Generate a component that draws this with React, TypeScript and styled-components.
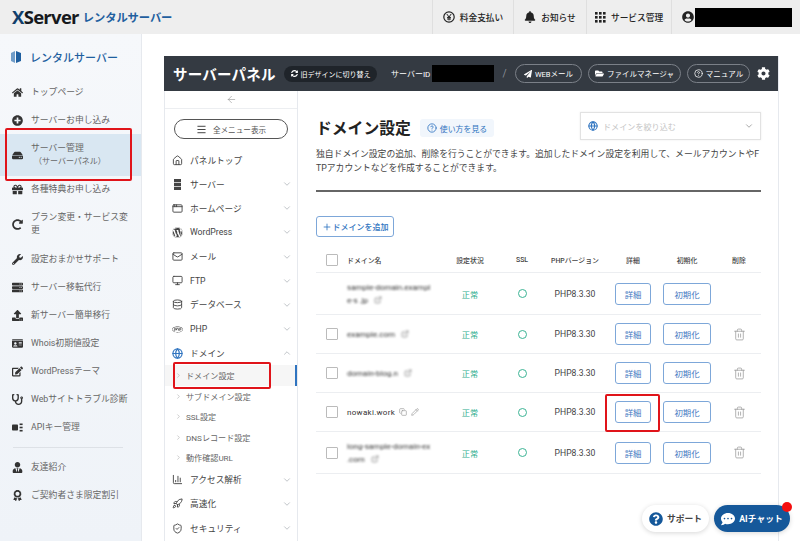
import styled, { createGlobalStyle } from 'styled-components';
import {
  FaAward, FaBell, FaCog, FaCommentDots, FaEdit, FaFolderOpen, FaGift, FaHdd, FaHome, FaIdCard,
  FaPaperPlane, FaPhp, FaPlusCircle, FaQuestionCircle, FaRedoAlt, FaServer, FaStethoscope, FaSyncAlt,
  FaUpload, FaUserCircle, FaUserTie, FaWordpress, FaWrench,
} from 'react-icons/fa';
import {
  AppWindow, ArrowLeft, ChartColumn, ChevronDown, ChevronRight, ChevronUp, CircleHelp, Copy, Database,
  ExternalLink, Globe, House, Mail, Menu, Monitor, Pencil, Plus, Rocket, ShieldCheck, Trash2,
} from 'lucide-react';

const GlobalStyle = createGlobalStyle`
  html, body { margin: 0; padding: 0; background: #fff; }
  body { font-family: Roboto, "Noto Sans CJK JP", "Noto Sans", sans-serif; color: #444; font-size: 10px; }
  * { box-sizing: border-box; }
`;

const Page = styled.div`
  position: relative;
  width: 800px;
  height: 541px;
  overflow: hidden;
  display: flex;
  flex-direction: column;
`;

// top bar
const TopBar = styled.header`
  height: 34px;
  flex: none;
  background: #eeeeee;
  display: flex;
  align-items: center;
  justify-content: space-between;
`;
const Logo = styled.div`
  display: flex;
  align-items: center;
  gap: 4px;
  padding-left: 12px;
`;
const LogoMark = styled.span`
  font: 700 18.5px/1 "Open Sans", "Liberation Sans", sans-serif;
  letter-spacing: -0.7px;
  color: #16191d;
  &::first-letter { color: #123f6b; }
`;
const LogoText = styled.span`
  font-size: 11.3px;
  font-weight: 700;
  color: #1f5f9f;
  letter-spacing: -0.1px;
`;
const TopNav = styled.nav`
  display: flex;
  height: 34px;
`;
const TopItem = styled.div<{ $w: number }>`
  width: ${(p) => p.$w}px;
  display: flex;
  align-items: center;
  justify-content: center;
  gap: 5px;
  border-left: 1px solid #dfdfdf;
  font-size: 8.7px;
  font-weight: 500;
  color: #222;
  white-space: nowrap;
  svg { flex: none; }
`;
const UserItem = styled(TopItem)`
  justify-content: flex-start;
  gap: 1px;
  padding-left: 10px;
`;
const Masked = styled.div<{ $w: number; $h: number }>`
  width: ${(p) => p.$w}px;
  height: ${(p) => p.$h}px;
  background: #000;
  flex: none;
`;

// body
const Body = styled.div`
  flex: 1;
  display: flex;
  min-height: 0;
`;
const Sidebar = styled.aside`
  width: 142px;
  flex: none;
  background: linear-gradient(180deg, #f6f8fb 0%, #eff3f8 100%);
  border-right: 1px solid #e6e9ee;
`;
const SideTitle = styled.div`
  height: 44px;
  display: flex;
  align-items: center;
  gap: 9px;
  padding: 2px 0 0 11px;
  font-size: 11px;
  font-weight: 500;
  color: #1f5f9f;
`;
const SideItem = styled.div<{ $h?: number; $active?: boolean }>`
  height: ${(p) => p.$h ?? 28}px;
  display: flex;
  align-items: center;
  gap: 8px;
  padding: 0 8px 0 12px;
  background: ${(p) => (p.$active ? '#d9e7f2' : 'transparent')};
  color: #666;
  font-size: 8.8px;
  line-height: 13px;
  word-break: break-all;
  svg { flex: none; color: #333; width: 11px; height: 11px; }
`;
const SideSub = styled.div`
  font-size: 8px;
  line-height: 14px;
  padding-left: 3px;
`;
const SideMain = styled.div`
  line-height: 14px;
`;
const SideRule = styled.hr`
  margin: 6px 18px 5px 13px;
  border: 0;
  border-top: 1px solid #dde1e6;
`;

const Main = styled.main`
  flex: 1;
  padding: 22px 21px 0 22px;
  min-width: 0;
`;
const Panel = styled.section`
  height: 100%;
  display: flex;
  flex-direction: column;
  border-right: 1px solid #e6e9ee;
`;
const PanelBar = styled.div`
  height: 35px;
  flex: none;
  background: #343a42;
  color: #fff;
  display: flex;
  align-items: center;
  padding-left: 9px;
`;
const PanelTitle = styled.div`
  font-size: 14.5px;
  font-weight: 700;
  letter-spacing: 0.2px;
  width: 111px;
  white-space: nowrap;
`;
const SwitchPill = styled.div`
  width: 93px;
  height: 16px;
  border-radius: 8px;
  background: #1f242a;
  display: flex;
  align-items: center;
  justify-content: center;
  gap: 3px;
  font-size: 7px;
  white-space: nowrap;
`;
const ServerId = styled.span`
  margin-left: 14px;
  width: 41px;
  font-size: 8px;
  white-space: nowrap;
`;
const Slash = styled.span`
  width: 21px;
  text-align: center;
  color: #8b9098;
  font-size: 10px;
`;
const BarPill = styled.div<{ $w: number }>`
  width: ${(p) => p.$w}px;
  height: 19px;
  margin-right: 6px;
  border: 1px solid #7b8088;
  border-radius: 10px;
  display: flex;
  align-items: center;
  justify-content: center;
  gap: 3px;
  font-size: 7.5px;
  white-space: nowrap;
`;
const GearWrap = styled.div`
  display: flex;
  margin-left: 1px;
`;

const PanelBody = styled.div`
  flex: 1;
  display: flex;
  min-height: 0;
`;
const Menu_ = styled.div`
  width: 134px;
  flex: none;
  border-left: 1px solid #e6e9ee;
  border-right: 1px solid #e6e9ee;
`;
const BackRow = styled.div`
  height: 18px;
  display: flex;
  align-items: center;
  justify-content: center;
  border-bottom: 1px solid #eceef1;
  color: #888;
`;
const AllMenuWrap = styled.div`
  height: 39px;
  padding: 10px 9px 0;
`;
const AllMenu = styled.div`
  height: 20px;
  border: 1px solid #555;
  border-radius: 10px;
  display: flex;
  align-items: center;
  justify-content: center;
  gap: 6px;
  font-size: 7.6px;
  color: #555;
  svg { color: #333; }
`;
const MenuRow = styled.div`
  height: 24.15px;
  display: flex;
  align-items: center;
  gap: 7px;
  padding: 0 5px 0 7px;
  font-size: 8.7px;
  color: #444;
  > svg:first-child { width: 11px; height: 11px; flex: none; color: #444; }
  > svg:last-child:not(:first-child) { margin-left: auto; color: #b5b9be; }
`;
const SubRow = styled.div<{ $active?: boolean }>`
  position: relative;
  height: 20.5px;
  display: flex;
  align-items: center;
  gap: 4px;
  padding-left: 10px;
  font-size: 8.1px;
  color: #666;
  background: ${(p) => (p.$active ? '#f6f6f6' : 'transparent')};
  svg { color: #aaa; flex: none; }
  ${(p) => (p.$active ? 'border-right: 2px solid #2f74c0;' : '')}
`;

// content
const Content = styled.div`
  flex: 1;
  min-width: 0;
  padding: 21px 17px 0 18px;
`;
const TitleRow = styled.div`
  display: flex;
  align-items: flex-start;
  height: 33px;
`;
const PageTitle = styled.h1`
  margin: 6px 0 0;
  font-size: 15.8px;
  line-height: 22px;
  font-weight: 700;
  color: #222;
  white-space: nowrap;
  width: 104px;
`;
const HelpLink = styled.div`
  margin-top: 7px;
  width: 74px;
  height: 18px;
  border-radius: 3px;
  background: #f1f6fc;
  color: #2f74c0;
  font-size: 7.9px;
  display: flex;
  align-items: center;
  justify-content: center;
  gap: 3px;
  white-space: nowrap;
`;
const FilterBox = styled.div`
  margin-left: auto;
  width: 181px;
  height: 28px;
  border: 1px solid #e2e2e2;
  display: flex;
  align-items: center;
  gap: 5px;
  padding: 0 6px 0 7px;
  color: #c4c4c4;
  font-size: 8.1px;
  white-space: nowrap;
  box-shadow: 0 0 2px rgba(0, 0, 0, 0.08);
  > svg:last-child { margin-left: auto; color: #999; }
`;
const Description = styled.p`
  margin: 0;
  font-size: 8.8px;
  line-height: 14px;
  color: #444;
  word-break: break-all;
  height: 45px;
  padding-top: 2px;
`;
const Rule = styled.hr`
  margin: 0;
  border: 0;
  border-top: 2px solid #666;
`;
const AddButton = styled.div`
  margin-top: 24px;
  width: 78px;
  height: 21px;
  border: 1px solid #7da7d9;
  border-radius: 3px;
  display: flex;
  align-items: center;
  justify-content: center;
  gap: 1px;
  font-size: 8px;
  font-weight: 500;
  color: #2f74c0;
  white-space: nowrap;
`;
const Table = styled.div`
  margin-top: 11px;
`;
const Row = styled.div<{ $h: number; $head?: boolean }>`
  display: grid;
  grid-template-columns: 31px 90px 66px 38px 68px 48px 60px 44px;
  height: ${(p) => p.$h}px;
  align-items: center;
  border-bottom: 1px solid #eceef1;
  justify-items: center;
  color: #444;
  font-size: ${(p) => (p.$head ? '6.9px' : '8.6px')};
  font-weight: ${(p) => (p.$head ? 500 : 400)};
`;
const Check = styled.span`
  width: 12px;
  height: 12px;
  border: 1px solid #bbb;
  border-radius: 1px;
  display: block;
`;
const NameHead = styled.span`
  justify-self: start;
`;
const NameCell = styled.div`
  justify-self: start;
  display: flex;
  align-items: center;
  gap: 4px;
  font-size: 8px;
  color: #333;
  letter-spacing: 0.3px;
  white-space: nowrap;
  svg { color: #999; flex: none; }
`;
const Blurred = styled.div`
  justify-self: start;
  width: 84px;
  filter: blur(1.3px);
  color: #333;
  font-size: 8px;
  line-height: 13px;
  word-break: break-all;
  svg { color: #777; margin-left: 6px; vertical-align: -1px; }
`;
const Ok = styled.span`
  color: #2fae8e;
  font-size: 8.2px;
`;
const Ring = styled.span`
  width: 9px;
  height: 9px;
  border: 1px solid #3bb394;
  border-radius: 50%;
`;
const ActionButton = styled.div<{ $w: number }>`
  width: ${(p) => p.$w}px;
  height: 22px;
  border: 1px solid #7da7d9;
  border-radius: 3px;
  display: flex;
  align-items: center;
  justify-content: center;
  color: #3f79bf;
  font-size: 8.4px;
`;

// floating
const Outline = styled.div<{ $x: number; $y: number; $w: number; $h: number }>`
  position: absolute;
  left: ${(p) => p.$x}px;
  top: ${(p) => p.$y}px;
  width: ${(p) => p.$w}px;
  height: ${(p) => p.$h}px;
  border: 2px solid #e0141a;
  border-radius: 2px;
`;
const Float = styled.div<{ $x: number; $w: number; $dark?: boolean }>`
  position: absolute;
  left: ${(p) => p.$x}px;
  top: 505px;
  width: ${(p) => p.$w}px;
  height: 27px;
  border-radius: 14px;
  display: flex;
  align-items: center;
  justify-content: center;
  gap: 4px;
  font-size: 8.8px;
  font-weight: 700;
  background: ${(p) => (p.$dark ? '#15589a' : '#fff')};
  color: ${(p) => (p.$dark ? '#fff' : '#444')};
  box-shadow: 0 1px 5px rgba(0, 0, 0, 0.16);
  white-space: nowrap;
  svg { color: ${(p) => (p.$dark ? '#fff' : '#15589a')}; }
`;
const RedDot = styled.span`
  position: absolute;
  left: 782px;
  top: 502px;
  width: 10px;
  height: 10px;
  border-radius: 50%;
  background: #f40f0f;
`;

// narrow stacked server used in the panel menu
const ServerStack = () => (
  <svg viewBox="0 0 11 11" fill="currentColor">
    <rect x="2" y="0" width="7" height="3.2" />
    <rect x="2" y="3.9" width="7" height="3.2" />
    <rect x="2" y="7.8" width="7" height="3.2" />
  </svg>
);

// key block with branch dots, as on the API row
const ApiIcon = () => (
  <svg viewBox="0 0 11 11" fill="currentColor">
    <rect x="0" y="2.5" width="6" height="6" rx="0.8" />
    <rect x="7.6" y="1.5" width="3" height="1.6" />
    <rect x="7.6" y="4.7" width="3" height="1.6" />
    <rect x="7.6" y="7.9" width="3" height="1.6" />
  </svg>
);

const sideTop = [
  { icon: <FaHome />, label: 'トップページ' },
  { icon: <FaPlusCircle />, label: 'サーバーお申し込み' },
];
const sideRest = [
  { icon: <FaWrench />, label: '設定おまかせサポート' },
  { icon: <FaServer />, label: 'サーバー移転代行' },
  { icon: <FaUpload />, label: '新サーバー簡単移行' },
  { icon: <FaIdCard />, label: 'Whois初期値設定' },
  { icon: <FaEdit />, label: 'WordPressテーマ' },
  { icon: <FaStethoscope />, label: 'Webサイトトラブル診断' },
  { icon: <ApiIcon />, label: 'APIキー管理' },
];

const rows = [
  { h: 42, blur: 'sample-domain.example-s .jp', first: true },
  { h: 39, blur: 'example.com' },
  { h: 39, blur: 'domain-blog.n' },
  { h: 39, name: 'nowaki.work' },
  { h: 42, blur: 'long-sample-domain-ex .com' },
];

const App = () => {
  return (
    <Page>
      <GlobalStyle />
      <TopBar>
        <Logo>
          <LogoMark>XServer</LogoMark>
          <LogoText>レンタルサーバー</LogoText>
        </Logo>
        <TopNav>
          <TopItem $w={81}>
            <svg width="12" height="12" viewBox="0 0 12 12">
              <circle cx="6" cy="6" r="5.2" fill="none" stroke="#222" strokeWidth="1.2" />
              <path d="M3.8 3l2.2 3 2.2-3M6 6v3.4M4 6.4h4M4 8h4" fill="none" stroke="#222" strokeWidth="1" />
            </svg>
            料金支払い
          </TopItem>
          <TopItem $w={73}><FaBell size={12} />お知らせ</TopItem>
          <TopItem $w={85}>
            <svg width="11" height="11" viewBox="0 0 11 11" fill="#222">
              {[0, 4, 8].flatMap((y) => [0, 4, 8].map((x) => <rect key={`${x}-${y}`} x={x} y={y} width="2.6" height="2.6" />))}
            </svg>
            サービス管理
          </TopItem>
          <UserItem $w={129}>
            <FaUserCircle size={12} />
            <Masked $w={97} $h={19} />
          </UserItem>
        </TopNav>
      </TopBar>
      <Body>
        <Sidebar>
          <SideTitle>
            <svg width="10" height="12" viewBox="0 0 10 12">
              <path d="M5 0l5 2v8l-5 2z" fill="#1f5f9f" />
              <path d="M0 2l4-2v12l-4-2z" fill="#6f9cc8" />
            </svg>
            レンタルサーバー
          </SideTitle>
          {sideTop.map((s) => (
            <SideItem key={s.label}>{s.icon}{s.label}</SideItem>
          ))}
          <SideItem $h={42} $active>
            <FaHdd />
            <div>
              <SideMain>サーバー管理</SideMain>
              <SideSub>（サーバーパネル）</SideSub>
            </div>
          </SideItem>
          <SideItem $h={27}><FaGift />各種特典お申し込み</SideItem>
          <SideItem $h={42}><FaRedoAlt />プラン変更・サービス変更</SideItem>
          {sideRest.map((s) => (
            <SideItem key={s.label}>{s.icon}{s.label}</SideItem>
          ))}
          <SideRule />
          <SideItem><FaUserTie />友達紹介</SideItem>
          <SideItem><FaAward />ご契約者さま限定割引</SideItem>
        </Sidebar>
        <Main>
          <Panel>
            <PanelBar>
              <PanelTitle>サーバーパネル</PanelTitle>
              <SwitchPill><FaSyncAlt size={7} />旧デザインに切り替え</SwitchPill>
              <ServerId>サーバーID</ServerId>
              <Masked $w={62} $h={17} />
              <Slash>/</Slash>
              <BarPill $w={67}><FaPaperPlane size={8} />WEBメール</BarPill>
              <BarPill $w={93}><FaFolderOpen size={9} />ファイルマネージャ</BarPill>
              <BarPill $w={63}><CircleHelp size={9} />マニュアル</BarPill>
              <GearWrap><FaCog size={13} /></GearWrap>
            </PanelBar>
            <PanelBody>
              <Menu_>
                <BackRow><ArrowLeft size={11} strokeWidth={1.2} /></BackRow>
                <AllMenuWrap>
                  <AllMenu><Menu size={11} />全メニュー表示</AllMenu>
                </AllMenuWrap>
                <MenuRow><House />パネルトップ</MenuRow>
                <MenuRow><ServerStack />サーバー<ChevronDown size={10} /></MenuRow>
                <MenuRow><AppWindow />ホームページ<ChevronDown size={10} /></MenuRow>
                <MenuRow><FaWordpress />WordPress<ChevronDown size={10} /></MenuRow>
                <MenuRow><Mail />メール<ChevronDown size={10} /></MenuRow>
                <MenuRow><Monitor />FTP<ChevronDown size={10} /></MenuRow>
                <MenuRow><Database />データベース<ChevronDown size={10} /></MenuRow>
                <MenuRow><FaPhp />PHP<ChevronDown size={10} /></MenuRow>
                <MenuRow><Globe style={{ color: '#2f74c0' }} strokeWidth={2.6} />ドメイン<ChevronUp size={10} /></MenuRow>
                <SubRow $active><ChevronRight size={7} />ドメイン設定</SubRow>
                <SubRow><ChevronRight size={7} />サブドメイン設定</SubRow>
                <SubRow><ChevronRight size={7} />SSL設定</SubRow>
                <SubRow><ChevronRight size={7} />DNSレコード設定</SubRow>
                <SubRow><ChevronRight size={7} />動作確認URL</SubRow>
                <MenuRow><ChartColumn />アクセス解析<ChevronDown size={10} /></MenuRow>
                <MenuRow><Rocket />高速化<ChevronDown size={10} /></MenuRow>
                <MenuRow><ShieldCheck />セキュリティ<ChevronDown size={10} /></MenuRow>
              </Menu_>
              <Content>
                <TitleRow>
                  <PageTitle>ドメイン設定</PageTitle>
                  <HelpLink><CircleHelp size={10} />使い方を見る</HelpLink>
                  <FilterBox>
                    <Globe size={10} color="#2f74c0" strokeWidth={2.6} />
                    ドメインを絞り込む
                    <ChevronDown size={10} />
                  </FilterBox>
                </TitleRow>
                <Description>
                  独自ドメイン設定の追加、削除を行うことができます。追加したドメイン設定を利用して、メールアカウントやFTPアカウントなどを作成することができます。
                </Description>
                <Rule />
                <AddButton><Plus size={10} />ドメインを追加</AddButton>
                <Table>
                  <Row $h={25} $head>
                    <Check />
                    <NameHead>ドメイン名</NameHead>
                    <span>設定状況</span>
                    <span>SSL</span>
                    <span>PHPバージョン</span>
                    <span>詳細</span>
                    <span>初期化</span>
                    <span>削除</span>
                  </Row>
                  {rows.map((r, i) => (
                    <Row $h={r.h} key={i}>
                      {r.first ? <span /> : <Check />}
                      {r.name ? (
                        <NameCell>{r.name}<Copy size={8} /><Pencil size={8} /></NameCell>
                      ) : (
                        <Blurred>{r.blur}<ExternalLink size={8} /></Blurred>
                      )}
                      <Ok>正常</Ok>
                      <Ring />
                      <span>PHP8.3.30</span>
                      <ActionButton $w={36}>詳細</ActionButton>
                      <ActionButton $w={48}>初期化</ActionButton>
                      {r.first ? <span /> : <Trash2 size={13} color="#999" strokeWidth={1.4} />}
                    </Row>
                  ))}
                </Table>
              </Content>
            </PanelBody>
          </Panel>
        </Main>
      </Body>
      <Outline $x={5} $y={128} $w={127} $h={53} />
      <Outline $x={173} $y={362} $w={98} $h={27} />
      <Outline $x={605} $y={394} $w={55} $h={38} />
      <Float $x={642} $w={67}><FaQuestionCircle size={14} />サポート</Float>
      <Float $x={714} $w={76} $dark><FaCommentDots size={14} />AIチャット</Float>
      <RedDot />
    </Page>
  );
};

export default App;
